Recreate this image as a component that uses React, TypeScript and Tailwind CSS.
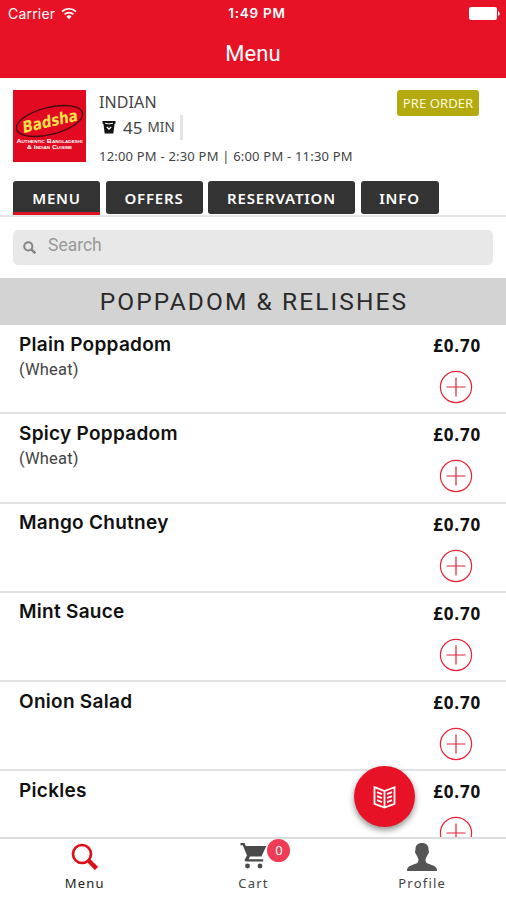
import { useState } from "react";

const dishes = [
  { id: 1, name: "Plain Poppadom", note: "(Wheat)", price: "£0.70" },
  { id: 2, name: "Spicy Poppadom", note: "(Wheat)", price: "£0.70" },
  { id: 3, name: "Mango Chutney", note: "", price: "£0.70" },
  { id: 4, name: "Mint Sauce", note: "", price: "£0.70" },
  { id: 5, name: "Onion Salad", note: "", price: "£0.70" },
  { id: 6, name: "Pickles", note: "", price: "£0.70" },
];

const tabs = [
  { label: "MENU", width: "w-[87px]" },
  { label: "OFFERS", width: "w-[97px]" },
  { label: "RESERVATION", width: "w-[147px]" },
  { label: "INFO", width: "w-[78px]" },
];

function Header() {
  return (
    <header className="h-[78px] shrink-0 bg-[#e81226] text-white">
      <div className="grid h-[27px] grid-cols-3 items-center pl-2 pr-[6px] font-['Inter',sans-serif] text-[13.5px] leading-none">
        <div className="flex items-center gap-[6px]">
          <span className="text-[14px] tracking-[0.2px]">Carrier</span>
          <svg width="16" height="13" viewBox="0 0 16 13" fill="none" stroke="currentColor" strokeWidth="1.7">
            <path d="M1 4.6a10 10 0 0 1 14 0M3.6 7.4a6.2 6.2 0 0 1 8.8 0" />
            <path d="M8 12.3 5.4 9.6a3.7 3.7 0 0 1 5.2 0z" fill="currentColor" stroke="none" />
          </svg>
        </div>
        <span className="whitespace-nowrap pl-[6px] text-center font-semibold tracking-[0.75px]">1:49 PM</span>
        <svg className="justify-self-end" width="31" height="13" viewBox="0 0 31 13" fill="currentColor">
          <rect width="28" height="13" rx="2" />
          <path d="M29 4.2c2.2.6 2.2 4 0 4.6z" />
        </svg>
      </div>
      <h1 className="pt-[13px] text-center font-['Roboto',sans-serif] text-[22px] leading-[28px] tracking-[0.1px]">Menu</h1>
    </header>
  );
}

function Logo() {
  return (
    <svg className="overflow-visible" width="73" height="72" viewBox="0 0 73 72">
      <rect width="73" height="72" fill="#e10a20" />
      <ellipse cx="36.5" cy="31" rx="34" ry="13.5" transform="rotate(-14 36.5 31)" fill="none" stroke="#3d0d12" strokeWidth="1.4" />
      <g
        transform="rotate(-13 36 31)"
        fontFamily="'DejaVu Sans', sans-serif"
        fontWeight="bold"
        fontStyle="italic"
        fill="#ffe14a"
      >
        <text x="9" y="37" fontSize="16" textLength="56" lengthAdjust="spacingAndGlyphs">Badsha</text>
      </g>
      <g fill="#fff" fontFamily="'Liberation Sans', sans-serif" fontWeight="bold" textAnchor="middle" style={{ fontVariant: "small-caps" }}>
        <text x="36.5" y="52.5" fontSize="6" textLength="66" lengthAdjust="spacingAndGlyphs">Authentic Bangladeshi</text>
        <text x="36.5" y="58.5" fontSize="6" textLength="45" lengthAdjust="spacingAndGlyphs">&amp; Indian Cuisine</text>
      </g>
    </svg>
  );
}

function Restaurant() {
  return (
    <section className="flex h-[103px] shrink-0 items-start pl-[13px] pr-[27px] pt-3 font-['Noto_Sans',sans-serif] text-[#444]">
      <Logo />
      <div className="flex-1 pl-[13px]">
        <p className="text-[16px] leading-[24px] tracking-[0.1px]">INDIAN</p>
        <div className="flex h-[26px] items-center">
          <svg className="ml-[3px]" width="14" height="14" viewBox="0 0 14 14" fill="#111">
            <path d="M.5 1h13v2.8h-.9L11.3 13.500H2.700L1.400 3.800H.5z" />
            <path d="M3 3.200q4 1.400 8 0" stroke="#fff" strokeWidth="1" fill="none" />
            <path d="m4.800 7 2.200 2L9.200 7" stroke="#fff" strokeWidth="1.3" fill="none" />
          </svg>
          <span className="pl-[7px] text-[17px] leading-none">45</span>
          <span className="pl-[5px] pt-[2px] text-[13.5px] leading-none tracking-[0.1px]">MIN</span>
          <span className="ml-[5px] h-[25px] w-[3px] bg-[#e4e4e4]" />
        </div>
        <p className="whitespace-nowrap pt-[7px] text-[13px] leading-[18px] tracking-[0.2px]">12:00 PM - 2:30 PM | 6:00 PM - 11:30 PM</p>
      </div>
      <span className="flex h-[26px] w-[82px] shrink-0 items-center justify-center whitespace-nowrap rounded-[3px] bg-[#b4a90f] text-[13px] leading-none tracking-[0.1px] text-[#fdfbd8]">
        PRE ORDER
      </span>
    </section>
  );
}

function AddButton() {
  return (
    <button className="mr-2">
      <svg className="block" width="34" height="34" viewBox="0 0 34 34" fill="none" stroke="#e02538" strokeWidth="1.2">
        <circle cx="17" cy="17" r="15.6" />
        <path d="M17 7.5v19M7.5 17h19" />
      </svg>
    </button>
  );
}

export default function App() {
  const [active, setActive] = useState("MENU");
  const [query, setQuery] = useState("");

  return (
    <main className="relative flex h-[900px] w-[506px] flex-col overflow-hidden bg-white">
      <Header />
      <Restaurant />

      <nav className="flex h-[36px] shrink-0 items-start gap-[5.5px] border-b-2 border-[#e6e6e6] pl-[13px] font-['Noto_Sans',sans-serif]">
        {tabs.map((t) => (
          <button
            key={t.label}
            onClick={() => setActive(t.label)}
            className={`${t.width} shrink-0 rounded-[3px] border-b-[3px] bg-[#333] text-[15px] font-semibold leading-none tracking-[0.8px] text-white ${
              active === t.label ? "h-[34px] rounded-b-none border-[#e01222] pt-[3px]" : "h-[33px] border-[#333] pt-[4px]"
            }`}
          >
            {t.label}
          </button>
        ))}
      </nav>

      <div className="h-[61px] shrink-0 px-[13px] pt-[13px]">
        <label className="flex h-[35px] items-center rounded-[5px] bg-[#e8e8e8] pl-[10px]">
          <svg width="13" height="13" viewBox="0 0 13 13" fill="none" stroke="#858585" strokeWidth="2">
            <circle cx="5.3" cy="5.3" r="4.1" />
            <path d="m8.3 8.3 4 4" strokeWidth="2.5" />
          </svg>
          <input
            className="ml-3 w-80 bg-transparent pb-[5px] font-['Roboto',sans-serif] text-[17.5px] leading-none outline-none placeholder:text-[#999]"
            placeholder="Search"
            value={query}
            onChange={(e) => setQuery(e.target.value)}
          />
        </label>
      </div>

      <h2 className="flex h-[47px] shrink-0 items-center justify-center bg-[#d3d3d3] pl-[2px] pt-px font-['Roboto',sans-serif] text-[24.5px] leading-none tracking-[2.1px] text-[#2a2a2a]">
        POPPADOM &amp; RELISHES
      </h2>

      <ul className="min-h-0 flex-1 overflow-hidden">
        {dishes.map((d) => (
          <li key={d.id} className="flex h-[89.25px] justify-between border-b-2 border-[#e2e2e2] pl-[19px] pr-[25px]">
            <div>
              <p className="pt-[5.5px] font-['Inter',sans-serif] text-[19px] font-semibold leading-[27px] tracking-[0.28px] text-[#111]">{d.name}</p>
              <p className="pt-[0.5px] font-['Roboto',sans-serif] text-[16.5px] leading-[24px] tracking-[0.2px] text-[#444]">{d.note}</p>
            </div>
            <div className="flex flex-col items-end">
              <p className="pb-[12px] pt-[9px] font-['Open_Sans',sans-serif] text-[17px] font-bold leading-[24px] tracking-[0.8px] text-[#111]">{d.price}</p>
              <AddButton />
            </div>
          </li>
        ))}
      </ul>

      <footer className="grid h-[63px] shrink-0 grid-cols-3 border-t-2 border-[#dcdcdc] bg-white font-['Noto_Sans',sans-serif] text-[13px] leading-none tracking-[1.2px] text-[#444]">
        <div className="flex flex-col items-center gap-[7px] pt-1">
          <svg width="27" height="27" viewBox="0 0 27 27" fill="none" stroke="#dd1018">
            <circle cx="11" cy="11" r="9" strokeWidth="2.7" />
            <path d="m17 17 8.500 8.500" strokeWidth="4.5" />
          </svg>
          <span className="pl-px text-[#222]">Menu</span>
        </div>
        <div className="flex flex-col items-center gap-[7px] pt-1">
          <div className="relative left-px">
            <svg width="27" height="27" viewBox="0 0 27 27" fill="#4a4a4a">
              <path d="M.5 0h4l1.300 3h20.500l-4.800 10.500H10l-1.300 2.700h14.500v2.300H6.300c-1.500 0-2-1.300-1.300-2.500l2-3.500L2.800 2.300H.5z" />
              <circle cx="7.5" cy="23" r="2.4" />
              <circle cx="20" cy="23" r="2.4" />
            </svg>
            <span className="absolute -top-[4px] left-[27px] flex h-[23px] w-[23px] items-center justify-center rounded-full bg-[#ee3b56] text-[13px] tracking-normal text-white">
              0
            </span>
          </div>
          <span className="pl-px">Cart</span>
        </div>
        <div className="flex flex-col items-center gap-[6px] pt-1">
          <svg width="30" height="28" viewBox="0 0 30 28" fill="#555">
            <path d="M15 0c4.300 0 6.700 2.500 6.500 6.500 0 1 .7 1.500.4 3-.2 1.200-1 1.500-1.300 2.300-.5 1.700-1.600 2.700-1.900 3.700-.3 1.300-.1 3.500.8 4.300 1.400 1.200 6.500 2.200 8.500 3.700 1.500 1.100 2 2.500 2 4.500H0c0-2 .5-3.400 2-4.500 2-1.500 7.100-2.500 8.500-3.700.9-.8 1.100-3 .8-4.300-.3-1-1.400-2-1.900-3.700-.3-.8-1.100-1.100-1.300-2.300-.3-1.500.4-2 .4-3C8.300 2.500 10.700 0 15 0z" />
          </svg>
          <span className="pl-px">Profile</span>
        </div>
      </footer>

      <button className="absolute left-[354px] top-[766px] flex h-[61px] w-[61px] items-center justify-center rounded-full bg-[#e81226] shadow-[0_3px_6px_rgba(0,0,0,0.45)]">
        <svg width="23" height="24" viewBox="0 0 23 24" fill="none" stroke="#fff" strokeWidth="1.8">
          <path d="M1.500 2.200 11.500 6l10-3.800v16.600L11.500 22.600l-10-3.800zM11.500 6v16.500" />
          <path d="m4 7.200 5 1.900M4 11.200l5 1.900M4 15.200l5 1.900M19 7.200l-5 1.900M19 11.200l-5 1.900M19 15.200l-5 1.900" />
        </svg>
      </button>
    </main>
  );
}
